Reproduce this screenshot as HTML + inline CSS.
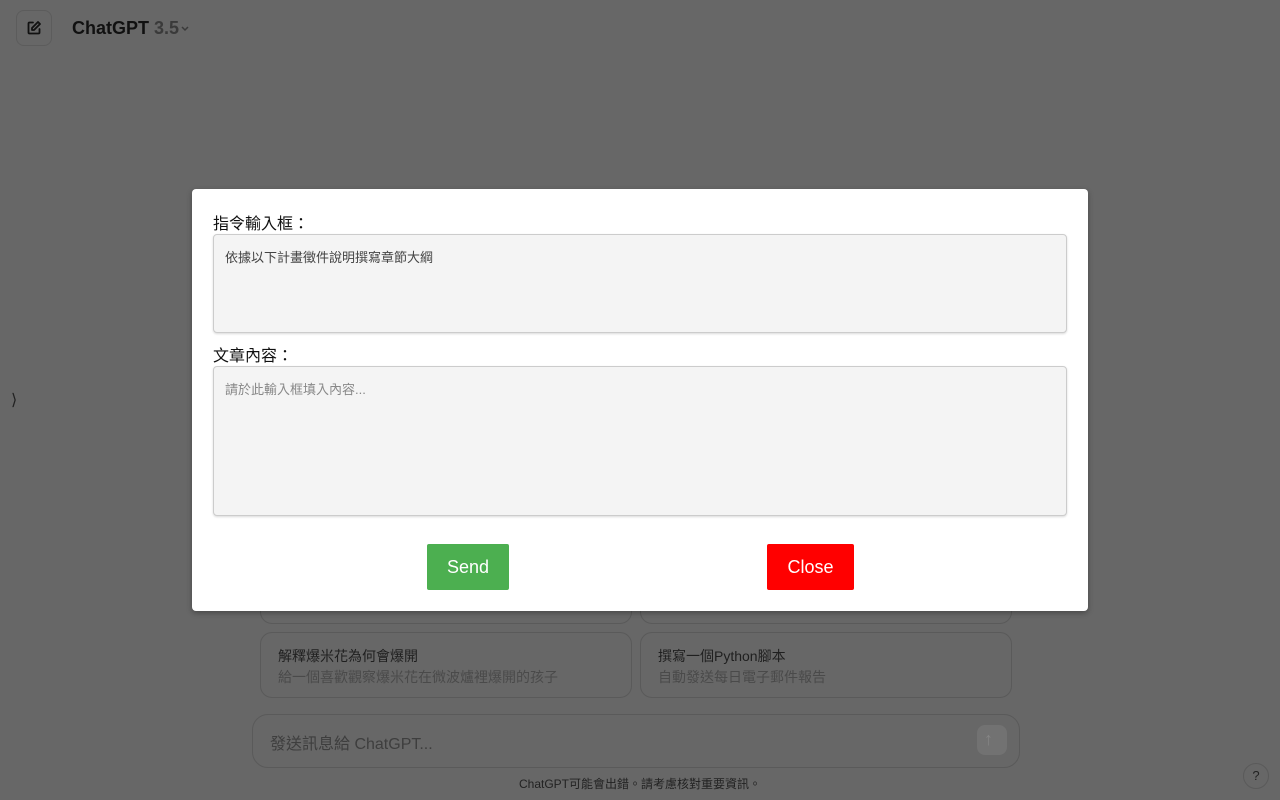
<!DOCTYPE html>
<html><head><meta charset="utf-8"><style>
*{box-sizing:border-box;margin:0;padding:0}
body{width:1280px;height:800px;background:#676767;font-family:"Liberation Sans","Noto Sans CJK TC",sans-serif;position:relative;overflow:hidden}
.abs{position:absolute}
.card{position:absolute;border:1px solid #5a5a5a;border-radius:12px;padding:0 17px}
.card .t{font-size:14px;color:#1f1f1f;margin-top:13px}
.card .s{font-size:14px;color:#4a4a4a;margin-top:1px}
.modal{left:192px;top:189px;width:896px;height:422px;background:#fff;border-radius:4px;box-shadow:0 2px 6px rgba(0,0,0,.3)}
.lbl{position:absolute;left:21px;font-size:16px;color:#111}
.ta{position:absolute;left:21px;width:854px;background:#f4f4f4;border:1px solid #ccc;border-radius:4px;box-shadow:0 1px 2px rgba(0,0,0,.15);font-size:13px;padding:12px 11px}
.btn{position:absolute;top:355px;height:46px;color:#fff;font-size:18px;display:flex;align-items:center;justify-content:center;border-radius:2px}
</style></head><body>
<div class="abs" style="left:16px;top:10px;width:36px;height:36px;border:1px solid #5c5c5c;border-radius:8px"></div>
<svg class="abs" style="left:26px;top:20px" width="16" height="16" viewBox="0 0 16 16" fill="none" stroke="#111" stroke-width="1.8" stroke-linecap="round" stroke-linejoin="round"><path d="M7 2.5H3.5a1 1 0 0 0-1 1v9a1 1 0 0 0 1 1h9a1 1 0 0 0 1-1V9"/><path d="M12 2l2 2-6 6H6V8z"/></svg>
<div class="abs" style="left:72px;top:18px;font-size:18px;font-weight:bold;color:#111">ChatGPT <span style="color:#3a3a3a;font-weight:bold">3.5</span></div>
<svg class="abs" style="left:180px;top:25px" width="10" height="8" viewBox="0 0 10 8" fill="none" stroke="#3a3a3a" stroke-width="1.5"><path d="M2 2l3 3 3-3"/></svg>
<div class="abs" style="left:11px;top:390px;font-size:16px;color:#222">⟩</div>

<div class="card" style="left:260px;top:580px;width:372px;height:44px"></div>
<div class="card" style="left:640px;top:580px;width:372px;height:44px"></div>
<div class="card" style="left:260px;top:632px;width:372px;height:66px"><div class="t">解釋爆米花為何會爆開</div><div class="s">給一個喜歡觀察爆米花在微波爐裡爆開的孩子</div></div>
<div class="card" style="left:640px;top:632px;width:372px;height:66px"><div class="t">撰寫一個Python腳本</div><div class="s">自動發送每日電子郵件報告</div></div>
<div class="abs" style="left:252px;top:714px;width:768px;height:54px;border:1px solid #5a5a5a;border-radius:16px"></div>
<div class="abs" style="left:270px;top:730px;font-size:16px;color:#3e3e3e">發送訊息給 ChatGPT...</div>
<div class="abs" style="left:977px;top:725px;width:30px;height:30px;border-radius:8px;background:#727272"></div>
<div class="abs" style="left:984px;top:729px;color:#858585;font-size:18px">↑</div>
<div class="abs" style="left:0;width:1280px;top:775px;text-align:center;font-size:12px;color:#222">ChatGPT可能會出錯。請考慮核對重要資訊。</div>
<div class="abs" style="left:1243px;top:763px;width:26px;height:26px;border:1px solid #5a5a5a;border-radius:50%;font-size:13px;color:#222;text-align:center;line-height:24px">?</div>

<div class="abs modal">
<div class="lbl" style="top:21px">指令輸入框：</div>
<div class="ta" style="top:45px;height:99px;color:#444">依據以下計畫徵件說明撰寫章節大綱</div>
<div class="lbl" style="top:153px">文章內容：</div>
<div class="ta" style="top:177px;height:150px;color:#888">請於此輸入框填入內容...</div>
<div class="btn" style="left:235px;width:82px;background:#4caf50">Send</div>
<div class="btn" style="left:575px;width:87px;background:#ff0000">Close</div>
</div>
</body></html>
